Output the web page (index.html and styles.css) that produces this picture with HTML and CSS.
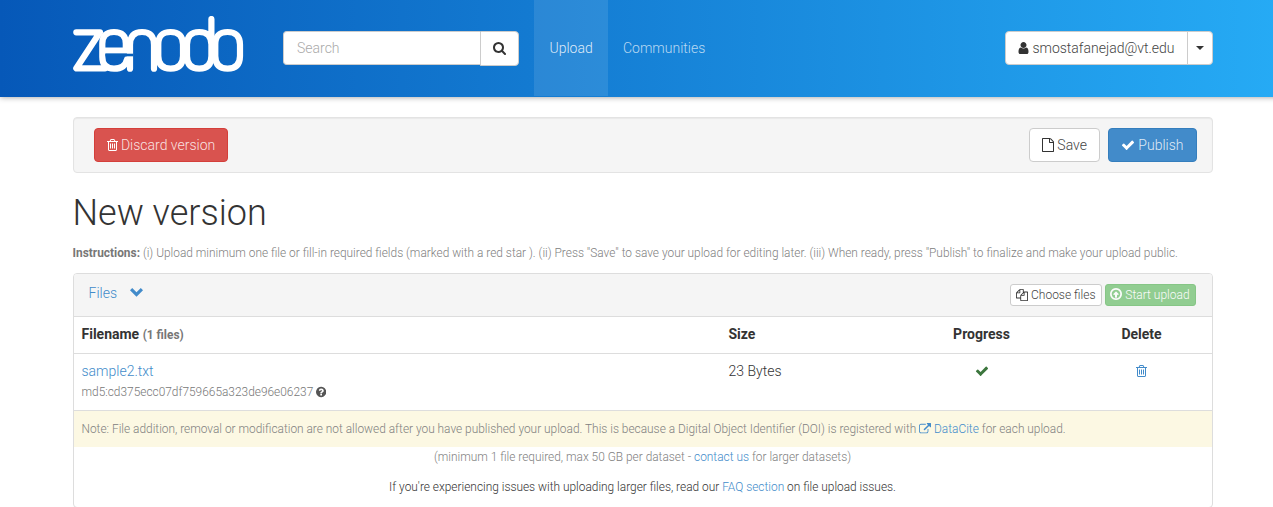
FILE: index.html
```html
<!DOCTYPE html>
<html lang="en">
<head>
<meta charset="utf-8">
<title>Zenodo - New version</title>
<link rel="stylesheet" href="styles.css">
</head>
<body>
<svg class="defs" aria-hidden="true">
  <symbol id="trash" viewBox="0 0 1408 1792"><path d="M512 736v576q0 14-9 23t-23 9h-64q-14 0-23-9t-9-23V736q0-14 9-23t23-9h64q14 0 23 9t9 23zm256 0v576q0 14-9 23t-23 9h-64q-14 0-23-9t-9-23V736q0-14 9-23t23-9h64q14 0 23 9t9 23zm256 0v576q0 14-9 23t-23 9h-64q-14 0-23-9t-9-23V736q0-14 9-23t23-9h64q14 0 23 9t9 23zm128 724V512H256v948q0 22 7 40.500t14.500 27 10.500 8.500h832q3 0 10.500-8.500t14.500-27 7-40.500zM480 384h448l-48-117q-7-9-17-11H546q-10 2-17 11zm928 32v64q0 14-9 23t-23 9h-96v948q0 83-47 143.500t-113 60.500H288q-66 0-113-58.500T128 1464V512H32q-14 0-23-9t-9-23v-64q0-14 9-23t23-9h309l70-167q15-37 54-63t79-26h320q40 0 79 26t54 63l70 167h309q14 0 23 9t9 23z"/></symbol>
  <symbol id="check" viewBox="0 0 1792 1792"><path d="M1671 566q0 40-28 68l-724 724-136 136q-28 28-68 28t-68-28l-136-136-362-362q-28-28-28-68t28-68l136-136q28-28 68-28t68 28l294 295 656-657q28-28 68-28t68 28l136 136q28 28 28 68z"/></symbol>
  <symbol id="search" viewBox="0 0 1664 1792"><path d="M1152 832q0-185-131.500-316.500T704 384 387.500 515.500 256 832t131.500 316.500T704 1280t316.500-131.500T1152 832zm512 832q0 52-38 90t-90 38q-54 0-90-38l-343-342q-179 124-399 124-143 0-273.500-55.500t-225-150-150-225T0 832t55.500-273.500 150-225 225-150T704 128t273.500 55.500 225 150 150 225T1408 832q0 220-124 399l343 343q37 37 37 90z"/></symbol>
  <symbol id="user" viewBox="0 0 1280 1792"><path d="M1280 1399q0 109-62.500 187t-150.500 78H213q-88 0-150.500-78T0 1399q0-85 8.500-160.500t31.500-152 58.500-131 94-89T327 832q131 128 313 128t313-128q76 0 134.500 34.500t94 89 58.500 131 31.500 152 8.500 160.500zm-256-887q0 159-112.500 271.500T640 896 368.500 783.500 256 512t112.500-271.500T640 128t271.500 112.500T1024 512z"/></symbol>
  <symbol id="file" viewBox="0 0 1536 1792"><path d="M1468 380q28 28 48 76t20 88v1152q0 40-28 68t-68 28H96q-40 0-68-28t-28-68V96q0-40 28-68T96 0h896q40 0 88 20t76 48zm-444-244v376h376q-10-29-22-41l-313-313q-12-12-41-22zm384 1528V640H992q-40 0-68-28t-28-68V128H128v1536h1280z"/></symbol>
  <symbol id="copy" viewBox="0 0 1792 1792"><path d="M1696 384q40 0 68 28t28 68v1216q0 40-28 68t-68 28H736q-40 0-68-28t-28-68v-288H96q-40 0-68-28t-28-68V640q0-40 20-88t48-76L476 68q28-28 76-48t88-20h416q40 0 68 28t28 68v328q68-40 128-40zm-544 213L853 896h299zM512 213L213 512h299zm196 647l316-316V128H640v416q0 40-28 68t-68 28H128v640h512v-256q0-40 20-88t48-76zm956 804V512h-384v416q0 40-28 68t-68 28H768v640z"/></symbol>
  <symbol id="circle-up" viewBox="0 0 1536 1792"><path d="M1118 921q0 14-9 23l-91 91q-10 10-23 10t-23-10l-76-76v353q0 26-19 45t-45 19H704q-26 0-45-19t-19-45V959l-76 76q-9 9-23 9t-23-9l-91-91q-9-10-9-23t10-23l317-317q9-9 23-9t23 9l318 318q9 9 9 22zM768 352q-148 0-273 73T297 623t-73 273 73 273 198 198 273 73 273-73 198-198 73-273-73-273-198-198-273-73zm768 544q0 209-103 385.500T1153.500 1561 768 1664t-385.500-103T103 1281.500 0 896t103-385.500T382.500 231 768 128t385.500 103T1433 510.500 1536 896z"/></symbol>
  <symbol id="question" viewBox="0 0 1536 1792"><path d="M896 1376v-192q0-14-9-23t-23-9H672q-14 0-23 9t-9 23v192q0 14 9 23t23 9h192q14 0 23-9t9-23zm256-672q0-88-55.500-163T958 425t-170-41q-243 0-371 213-15 24 8 42l132 100q7 6 19 6 16 0 25-12 53-68 86-92 34-24 86-24 48 0 85.500 26t37.500 59q0 38-20 61t-68 45q-63 28-115.500 86.500T640 1020v36q0 14 9 23t23 9h192q14 0 23-9t9-23q0-19 21.500-49.500T972 957q32-18 49-28.500t46-35 44.500-48 28-60.500 12.500-81zm384 192q0 209-103 385.500T1153.500 1561 768 1664t-385.500-103T103 1281.500 0 896t103-385.500T382.500 231 768 128t385.500 103T1433 510.500 1536 896z"/></symbol>
  <symbol id="external" viewBox="0 0 1792 1792"><path d="M1408 928v320q0 119-84.500 203.500T1120 1536H288q-119 0-203.500-84.500T0 1248V416q0-119 84.500-203.500T288 128h704q14 0 23 9t9 23v64q0 14-9 23t-23 9H288q-66 0-113 47t-47 113v832q0 66 47 113t113 47h832q66 0 113-47t47-113V928q0-14 9-23t23-9h64q14 0 23 9t9 23zm384-864v512q0 26-19 45t-45 19-45-19l-176-176-652 652q-10 10-23 10t-23-10L695 983q-10-10-10-23t10-23l652-652-176-176q-19-19-19-45t19-45 45-19h512q26 0 45 19t19 45z"/></symbol>
</svg>

<header class="topbar">
  <div class="container topbar-row">
    <a class="brand" aria-label="Zenodo">
      <svg width="171" height="57" viewBox="0 0 171 57" fill="none" stroke="#fff" stroke-width="6.2" stroke-linecap="round" stroke-linejoin="round">
        <path d="M3.300 16.300H27L3.300 52.300H32"/>
        <path d="M32 34.500H52.800V27.500Q52.800 16 41 16T29.300 28V41Q29.300 52.700 41 52.700Q52 52.700 54 43.500"/>
        <path d="M57 52.700V29Q57 16 69 16T81 29V52.700"/>
        <path d="M85.300 28.500V40Q85.300 52.600 97.600 52.600T110 40V28.500Q110 16 97.600 16T85.300 28.500Z"/>
        <path d="M138.400 3V40Q138.400 52.600 126.200 52.600T114 40V28.500Q114 16 126.200 16T138.400 28.500"/>
        <path d="M142.300 28.500V40Q142.300 52.600 154.600 52.600T167 40V28.500Q167 16 154.600 16T142.300 28.500Z"/>
        <path d="M32.400 39H60.300" stroke="#0961bc" stroke-width="2.600" stroke-linecap="butt"/>
      </svg>
    </a>
    <form class="search">
      <input type="text" placeholder="Search">
      <button type="button" aria-label="Search"><svg class="i" width="13" height="14"><use href="#search"/></svg></button>
    </form>
    <nav class="nav"><a class="active">Upload</a><a>Communities</a></nav>
    <div class="account">
      <button class="btn account-name" type="button"><svg class="i" width="11" height="14"><use href="#user"/></svg> smostafanejad@vt.edu</button>
      <button class="btn account-caret" type="button" aria-label="Account menu"><span class="caret"></span></button>
    </div>
  </div>
</header>

<main class="container">
  <div class="well">
    <button class="btn danger" type="button"><svg class="i" width="11" height="14"><use href="#trash"/></svg> Discard version</button>
    <div class="actions">
      <button class="btn" type="button"><svg class="i" width="12" height="14"><use href="#file"/></svg> Save</button>
      <button class="btn primary" type="button"><svg class="i" width="14" height="14"><use href="#check"/></svg> Publish</button>
    </div>
  </div>
  <h1>New version</h1>
  <p class="instructions"><b>Instructions:</b> (i) Upload minimum one file or fill-in required fields (marked with a red star ). (ii) Press "Save" to save your upload for editing later. (iii) When ready, press "Publish" to finalize and make your upload public.</p>

  <section class="panel">
    <div class="panel-head">
      <a class="files">Files <svg class="chevron" width="13" height="9" viewBox="0 0 13 9"><path d="M2.200 0L6.500 4.200L10.800 0L13 2.200L6.500 8.700L0 2.200Z"/></svg></a>
      <div class="small-actions">
        <button class="btn xs" type="button"><svg class="i" width="12" height="12"><use href="#copy"/></svg> Choose files</button>
        <button class="btn xs success" type="button"><svg class="i" width="12" height="14"><use href="#circle-up"/></svg> Start upload</button>
      </div>
    </div>
    <div class="row head">
      <div>Filename <small>(1 files)</small></div><div>Size</div><div class="c">Progress</div><div class="c">Delete</div>
    </div>
    <div class="row item">
      <div><a>sample2.txt</a><br><small>md5:cd375ecc07df759665a323de96e06237 <svg class="i q" width="10.300" height="12"><use href="#question"/></svg></small></div>
      <div>23 Bytes</div>
      <div class="c ok"><svg class="i" width="14" height="14"><use href="#check"/></svg></div>
      <div class="c"><a><svg class="i" width="11" height="14"><use href="#trash"/></svg></a></div>
    </div>
    <div class="note">Note: File addition, removal or modification are not allowed after you have published your upload. This is because a Digital Object Identifier (DOI) is registered with <a><svg class="i" width="12" height="12"><use href="#external"/></svg> DataCite</a> for each upload.</div>
    <p class="limits">(minimum 1 file required, max 50 GB per dataset - <a>contact us</a> for larger datasets)</p>
    <p class="faq">If you're experiencing issues with uploading larger files, read our <a>FAQ section</a> on file upload issues.</p>
  </section>
</main>
</body>
</html>
```
FILE: styles.css
```css
* { box-sizing: border-box; }
html { overflow: hidden; }
body { margin: 0; width: 1285px; height: 507px; overflow: hidden; background: #fff; color: #333; font: 300 14px/20px Roboto, sans-serif; }
.defs { display: none; }
.i { display: inline-block; fill: currentColor; vertical-align: -2px; }
a { color: #428bca; text-decoration: none; }
button, input { font: inherit; }
.container { width: 1140px; margin: 0 auto; }

.topbar { height: 97px; background: linear-gradient(to right, #0658b8, #26abf5); box-shadow: 0 0 6px rgba(0, 0, 0, .4); }
.topbar-row { display: flex; height: 96px; }
.brand { width: 210.500px; padding-top: 16px; }
.brand svg { display: block; }
.search { display: flex; width: 236px; height: 35px; margin-top: 31px; }
.search input { width: 197px; height: 34px; padding: 6px 12px 6px 13px; border: 1px solid #ccc; border-right: 0; border-radius: 4px 0 0 4px; color: #555; background: #fff; }
.search input::placeholder { color: #aaa; opacity: 1; }
.search button { width: 39px; padding: 0; border: 1px solid #ccc; border-radius: 0 4px 4px 0; background: #fff; color: #333; }
.search button .i { vertical-align: -1px; }
.nav { display: flex; margin-left: 15px; }
.nav a { padding: 38px 15px; color: rgba(255, 255, 255, .7); }
.nav .active { width: 74px; padding-left: 15.500px; background: rgba(255, 255, 255, .1); color: rgba(255, 255, 255, .85); }
.account { display: flex; margin: 31px 0 0 auto; }

.btn { height: 34px; padding: 6px 12px; border: 1px solid #ccc; border-radius: 4px; background: #fff; color: #444; line-height: 20px; white-space: nowrap; }
.btn .i { color: #333; }
.account-name { border-radius: 4px 0 0 4px; }
.account-caret { width: 26px; margin-left: -1px; padding: 0 8px; border-radius: 0 4px 4px 0; }
.caret { display: block; border: 4px solid transparent; border-top-color: #333; border-bottom: 0; }
.danger { background: #d9534f; border-color: #d43f3a; color: rgba(255, 255, 255, .85); }
.primary { background: #428bca; border-color: #357ebd; color: rgba(255, 255, 255, .85); }
.success { width: 91px; background: #5cb85c; border-color: #4cae4c; color: #fff; opacity: .65; }
.danger .i, .primary .i, .success .i { color: #fff; }
.xs { height: 22px; padding: 1px 5px; border-radius: 3px; font-size: 12px; line-height: 18px; }
.btn.success { padding: 1px 4.500px; }

.well { display: flex; justify-content: space-between; height: 56px; margin-top: 20px; padding: 10px 15px 10px 20px; border: 1px solid #e3e3e3; border-radius: 4px; background: #f5f5f5; box-shadow: inset 0 1px 1px rgba(0, 0, 0, .05); }
.actions { display: flex; gap: 8px; }
h1 { margin: 21px 0 9px; font-size: 36px; line-height: 39px; font-weight: 300; }
.instructions { margin: 0; padding-top: 1px; height: 31px; color: #808080; font-size: 11.900px; line-height: 20px; white-space: nowrap; }
b { font-weight: 700; color: #777; }

.panel { height: 235px; border: 1px solid #ddd; border-radius: 4px; background: #fff; }
.panel-head { display: flex; justify-content: space-between; height: 43px; padding: 9px 16px 0 15px; background: #f5f5f5; border-bottom: 1px solid #ddd; border-radius: 3px 3px 0 0; }
.chevron { margin-left: 10px; fill: currentColor; vertical-align: 1px; }
.small-actions { display: flex; gap: 3px; padding-top: 1px; }
.row { display: grid; grid-template-columns: 647px 180px 162px 1fr; }
.row > div { padding: 7px 8px 0; }
.row .c { text-align: center; }
.row .c:last-child { padding-left: 17px; }
.head { height: 37px; border-bottom: 1px solid #ddd; font-weight: 700; }
.row small { font-size: 11.900px; color: #777; }
.item { height: 57px; border-bottom: 1px solid #ddd; }
.q { color: #555; }
.ok { color: #3c763d; }
.note { height: 36px; padding: 8px; background: #fcf8e3; color: #808080; font-size: 11.900px; }
.limits, .faq { margin: 0 0 10px; text-align: center; font-size: 11.900px; }
.limits { color: #808080; }
```
